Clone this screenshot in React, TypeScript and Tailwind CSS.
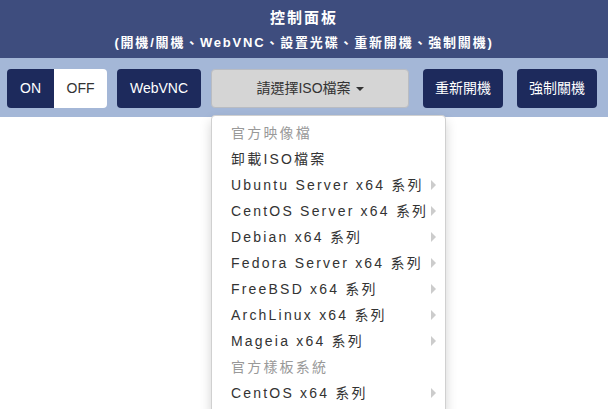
import { useState } from 'react';

const menuItems: { label: string; header?: boolean; sub?: boolean }[] = [
  { label: '官方映像檔', header: true },
  { label: '卸載ISO檔案' },
  { label: 'Ubuntu Server x64 系列', sub: true },
  { label: 'CentOS Server x64 系列', sub: true },
  { label: 'Debian x64 系列', sub: true },
  { label: 'Fedora Server x64 系列', sub: true },
  { label: 'FreeBSD x64 系列', sub: true },
  { label: 'ArchLinux x64 系列', sub: true },
  { label: 'Mageia x64 系列', sub: true },
  { label: '官方樣板系統', header: true },
  { label: 'CentOS x64 系列', sub: true },
];

const font = { fontFamily: '"Liberation Sans", "Noto Sans CJK TC", sans-serif' };

export default function App() {
  const [power, setPower] = useState<'on' | 'off'>('on');

  return (
    <div className="min-h-[409px] bg-white" style={font}>
      {/* Header */}
      <div className="h-[58px] bg-[#3e4d7e] flex flex-col items-center text-white font-bold">
        <div className="mt-[8px] text-[15px] leading-[20px] tracking-[2px]">控制面板</div>
        <div className="mt-[6px] text-[13px] leading-[18px] tracking-[1.8px]">
          (開機/關機、WebVNC、設置光碟、重新開機、強制關機)
        </div>
      </div>

      {/* Toolbar */}
      <div className="relative h-[59px] bg-[#a4b7d7] flex items-start pt-[11px] pl-[7px] text-[14px]">
        <div className="flex h-[39px] rounded-[4px] overflow-hidden">
          <button
            onClick={() => setPower('on')}
            className={`w-[47px] ${power === 'on' ? 'bg-[#1d2a5c] text-white' : 'bg-white text-[#333]'}`}
          >
            ON
          </button>
          <button
            onClick={() => setPower('off')}
            className={`w-[53px] ${power === 'off' ? 'bg-[#1d2a5c] text-white' : 'bg-white text-[#333]'}`}
          >
            OFF
          </button>
        </div>
        <button className="ml-[10px] h-[39px] w-[84px] rounded-[4px] bg-[#1d2a5c] text-white">WebVNC</button>

        <div className="relative ml-[10px]">
          <button className="h-[39px] w-[198px] rounded-[4px] border border-[#b9bcc2] bg-[#d5d5d5] text-[#333] flex items-center justify-center gap-[5px]">
            <span>請選擇ISO檔案</span>
            <span className="inline-block w-0 h-0 border-l-[4px] border-r-[4px] border-t-[4px] border-l-transparent border-r-transparent border-t-[#333]" />
          </button>

          {/* Dropdown menu */}
          <div className="absolute left-0 top-[46px] w-[235px] h-[300px] bg-white border border-[#d0d0d0] rounded-[4px] shadow-[0_6px_12px_rgba(0,0,0,0.175)] pt-[4px] overflow-hidden">
            {menuItems.map((item) => (
              <div
                key={item.label}
                className={`h-[26px] flex items-center justify-between pl-[19px] pr-[9px] text-[14px] tracking-[2.2px] ${
                  item.header ? 'text-[#999]' : 'text-[#333]'
                }`}
              >
                <span>{item.label}</span>
                {item.sub && (
                  <span className="inline-block w-0 h-0 border-t-[5px] border-b-[5px] border-l-[5px] border-t-transparent border-b-transparent border-l-[#ccc]" />
                )}
              </div>
            ))}
          </div>
        </div>

        <button className="ml-[14px] h-[39px] w-[80px] rounded-[4px] bg-[#1d2a5c] text-white">重新開機</button>
        <button className="ml-[14px] h-[39px] w-[80px] rounded-[4px] bg-[#1d2a5c] text-white">強制關機</button>
      </div>
    </div>
  );
}
